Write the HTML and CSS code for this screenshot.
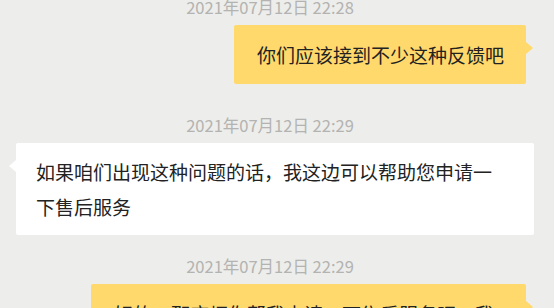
FILE: index.html
```html
<!DOCTYPE html>
<html>
<head>
<meta charset="utf-8">
<title>聊天记录</title>
<link rel="stylesheet" href="styles.css">
</head>
<body>
<div class="chat">
	<div class="time">2021年07月12日 22:28</div>
	<div class="row out">
		<div class="bubble">你们应该接到不少这种反馈吧</div>
	</div>
	<div class="time">2021年07月12日 22:29</div>
	<div class="row in">
		<div class="bubble">如果咱们出现这种问题的话，我这边可以帮助您申请一下售后服务</div>
	</div>
	<div class="time">2021年07月12日 22:29</div>
	<div class="row out">
		<div class="bubble">好的，那麻烦你帮我申请一下售后服务吧，我需要怎么操作呢</div>
	</div>
</div>
</body>
</html>
```

FILE: styles.css
```css
html,body{
	margin:0;
	padding:0;
	background-color:#EDEDEB;
	font-family:"Noto Sans CJK SC","Noto Sans",sans-serif;
	overflow:hidden;
}
.chat{
	display:flex;
	flex-direction:column;
}
.time{
	margin:28px 0 8px 0;
	padding-right:14px;
	line-height:20px;
	font-size:16.5px;
	color:#B3B3B1;
	text-align:center;
}
.time:first-child{
	margin-top:-3px;
}
.row.out + .time{
	margin-top:31px;
}
.row.in + .time{
	margin-top:21px;
}
.row{
	display:flex;
}
.row.out{
	justify-content:flex-end;
	padding-left:91px;
	padding-right:28px;
}
.row.in{
	justify-content:flex-start;
	padding-left:16px;
	padding-right:20px;
}
.bubble{
	position:relative;
	padding:12px 22px 12px 23px;
	font-size:19px;
	line-height:35px;
	color:#222222;
	border-radius:2px;
}
.out .bubble{
	background-color:#FFD96B;
}
.in .bubble{
	background-color:#FFFFFF;
	padding:11px 36px 11px 20px;
}
.bubble::after{
	content:"";
	position:absolute;
	top:17px;
	border-top:6px solid transparent;
	border-bottom:6px solid transparent;
}
.out .bubble::after{
	right:-7px;
	border-left:7px solid #FFD96B;
}
.in .bubble::after{
	left:-7px;
	border-right:7px solid #FFFFFF;
}
```
